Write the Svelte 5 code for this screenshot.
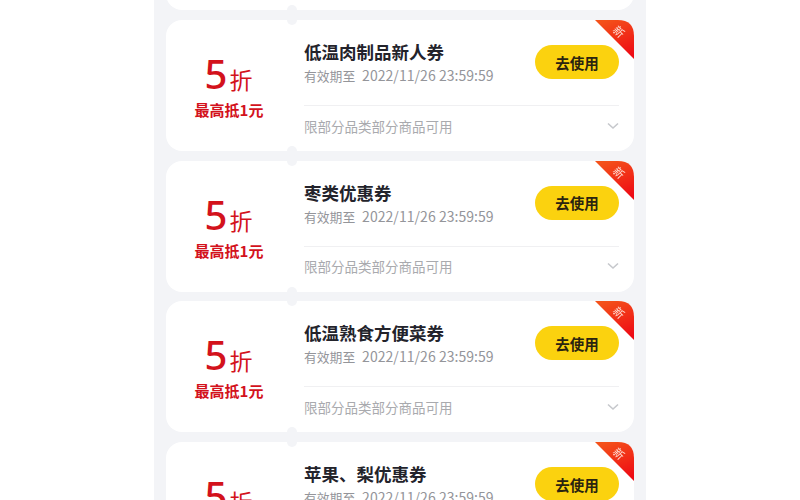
<script>
  const titles = ['新人优惠券', '低温肉制品新人券', '枣类优惠券', '低温熟食方便菜券', '苹果、梨优惠券'];
</script>

<div class="page">
  <div class="panel">
    <div class="list">
      {#each titles as title}
        <article class="card">
          <div class="stub">
            <div class="amount"><span class="num">5</span><span class="unit">折</span></div>
            <div class="cap">最高抵1元</div>
          </div>
          <div class="body">
            <div class="top">
              <div class="info">
                <div class="title">{title}</div>
                <div class="date">有效期至 <span class="digits">2022/11/26 23:59:59</span></div>
              </div>
              <button class="use">去使用</button>
            </div>
            <div class="foot">
              <span>限部分品类部分商品可用</span>
              <svg class="chev" width="12" height="8" viewBox="0 0 12 8"><path d="M1 1.5 6 6l5-4.5" fill="none" stroke="#c6c8cc" stroke-width="1.6"/></svg>
            </div>
          </div>
          <div class="ribbon">
            <svg width="39" height="39" viewBox="0 0 39 39">
              <defs><linearGradient id="rg" x1="0.3" y1="0" x2="0.7" y2="1"><stop offset="0" stop-color="#f4511a"/><stop offset="1" stop-color="#ee0a14"/></linearGradient></defs>
              <path d="M0 0H23Q39 0 39 16V39Z" fill="url(#rg)"/>
            </svg>
            <span class="tag">新</span>
          </div>
        </article>
      {/each}
    </div>
  </div>
</div>

<style>
  :global(body) { margin: 0; background: #fff; }
  .page { width: 800px; height: 500px; overflow: hidden; display: flex; justify-content: center; font-family: "Noto Sans CJK SC", "Noto Sans", sans-serif; }
  .panel { width: 492px; height: 500px; background: #f3f4f7; overflow: hidden; flex: none; }
  .list { display: flex; flex-direction: column; gap: 9.7px; padding: 0 12px; margin-top: -120.7px; filter: blur(0.6px); }
  .card { position: relative; display: flex; height: 131px; flex: none; background: #fff; border-radius: 16px; }
  .card::before, .card::after { content: ""; position: absolute; left: 121px; width: 10px; height: 10px; border-radius: 50%; background: #f3f4f7; }
  .card::before { top: -5px; }
  .card::after { bottom: -5px; }
  .stub { width: 126px; flex: none; display: flex; flex-direction: column; align-items: center; padding-top: 31px; box-sizing: border-box; color: #d3121c; }
  .amount { display: flex; align-items: baseline; height: 46px; line-height: 46px; gap: 2px; margin-left: -1px; }
  .num { font-family: "Noto Sans", sans-serif; font-size: 40px; font-weight: 500; }
  .unit { font-size: 23px; }
  .cap { font-size: 15px; font-weight: 700; line-height: 20px; margin-top: 3px; }
  .body { flex: 1; padding: 0 15px 0 12px; display: flex; flex-direction: column; }
  .top { height: 85px; flex: none; display: flex; align-items: center; justify-content: space-between; border-bottom: 1px solid #f0f0f2; }
  .info { margin-top: 0; }
  .title { font-size: 17.5px; font-weight: 700; line-height: 24px; color: #23232b; }
  .date { font-size: 12.8px; line-height: 18px; margin-top: 2px; color: #94959a; white-space: nowrap; }
  .digits { font-size: 14px; margin-left: 4px; letter-spacing: 0.05px; }
  .use { width: 84px; height: 34px; border: 0; border-radius: 17px; background: #fbd20f; color: #2a2410; font: 700 14.5px "Noto Sans CJK SC", sans-serif; padding: 0; margin-top: -1px; }
  .foot { flex: 1; display: flex; align-items: center; justify-content: space-between; font-size: 13.5px; color: #a9aaae; padding-bottom: 6px; }
  .ribbon { position: absolute; top: 0; right: 0; width: 39px; height: 39px; }
  .ribbon svg { display: block; }
  .tag { position: absolute; left: 19px; top: 4px; font-size: 11px; line-height: 14px; color: #ffe0d8; transform: rotate(45deg); }
</style>
